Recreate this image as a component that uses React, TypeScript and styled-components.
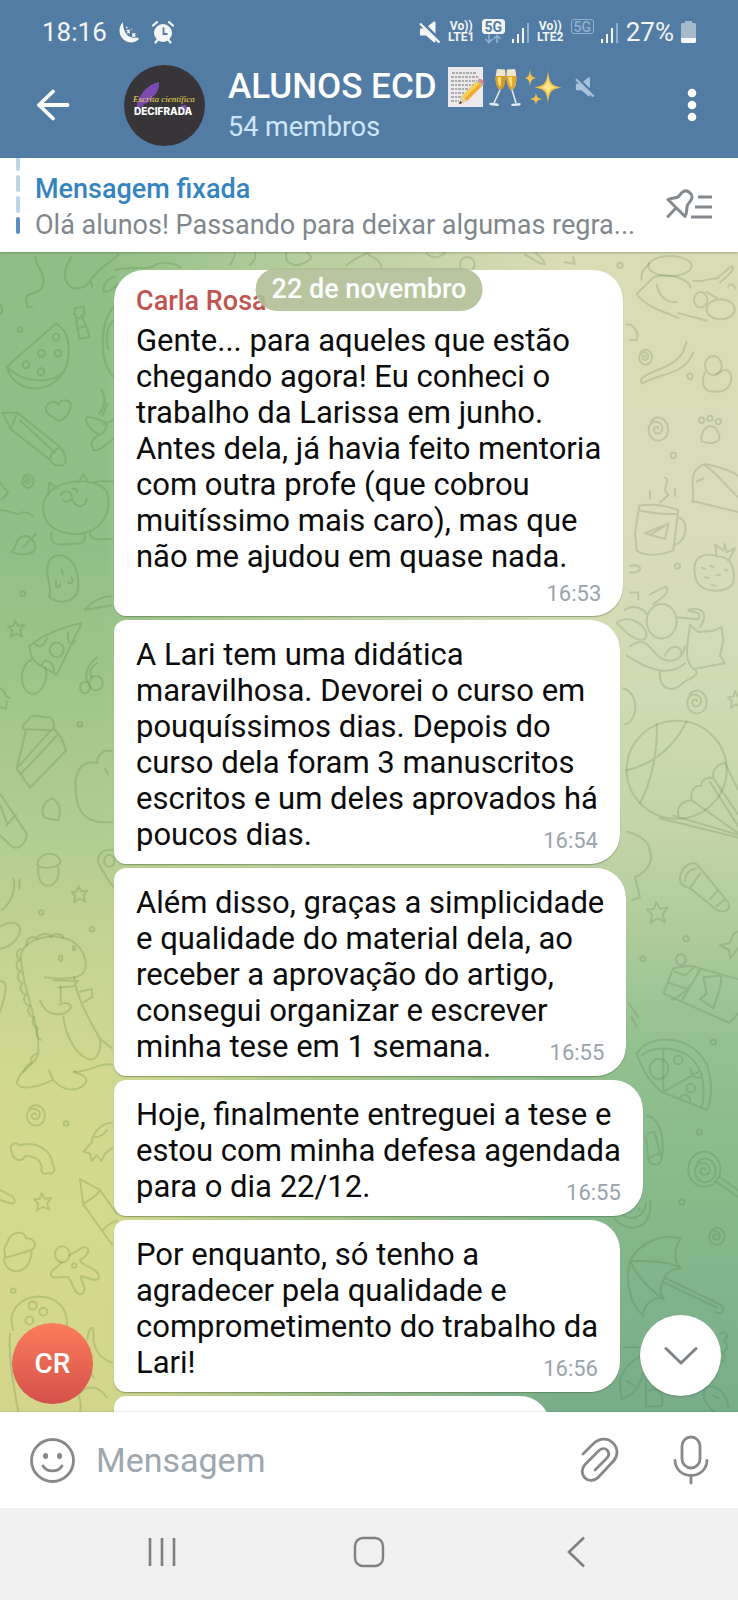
import React from 'react';
import styled, { createGlobalStyle } from 'styled-components';

const GlobalStyle = createGlobalStyle`
  *, *::before, *::after { box-sizing: border-box; }
  html, body { margin: 0; padding: 0; }
  body { font-family: Roboto, "Noto Sans", sans-serif; background: #fff; color: #0b0b0b; }
  button, input { font: inherit; }
`;

const Screen = styled.div`
  display: flex;
  flex-direction: column;
  height: 100vh;
  overflow: hidden;
`;

/* ---------- top area ---------- */

const TopArea = styled.header`
  flex: none;
  background: #527ca3;
  color: #fff;
`;

const StatusBar = styled.div`
  display: flex;
  align-items: center;
  justify-content: space-between;
  height: 62px;
  padding: 2px 42px 0 42px;
  font-size: 26px;
  line-height: 32px;
  color: #f3f6f4;
`;

const StatusGroup = styled.div<{ $gap: number }>`
  display: flex;
  align-items: center;
  gap: ${(p) => p.$gap}px;
`;

const Carrier = styled.div`
  display: flex;
  flex-direction: column;
  align-items: center;
  width: 27px;
  font-size: 12px;
  line-height: 11px;
  font-weight: 700;
`;

const NetworkType = styled.div`
  display: flex;
  flex-direction: column;
  align-items: center;
  height: 26px;
`;

const NetworkTag = styled.span<{ $active?: boolean }>`
  width: 23px;
  height: 15px;
  border: 1px solid ${(p) => (p.$active ? '#f3f6f4' : '#8fb0d0')};
  border-radius: 3px;
  background: ${(p) => (p.$active ? '#f3f6f4' : 'transparent')};
  color: ${(p) => (p.$active ? '#527ca3' : '#8fb0d0')};
  font-size: 14px;
  line-height: 14px;
  font-weight: ${(p) => (p.$active ? 700 : 500)};
  text-align: center;
`;

const TitleRow = styled.div`
  display: flex;
  align-items: center;
  height: 96px;
  padding: 0 31px 10px 29px;
`;

const IconButton = styled.button`
  display: flex;
  align-items: center;
  justify-content: center;
  flex: none;
  padding: 0;
  border: 0;
  background: none;
  color: inherit;
  cursor: pointer;
`;

const GroupPicture = styled.div`
  flex: none;
  width: 81px;
  height: 81px;
  margin: 0 23px 0 46px;
`;

const TitleBlock = styled.div`
  flex: 1;
  min-width: 0;
  padding-top: 2px;
`;

const TitleLine = styled.div`
  display: flex;
  align-items: center;
  height: 42px;
`;

const Title = styled.h1`
  margin: 0 11px 0 0;
  font-size: 35px;
  line-height: 42px;
  font-weight: 500;
  white-space: nowrap;
`;

const MutedMark = styled.span`
  display: flex;
  margin-left: 9px;
`;

const MembersLine = styled.p`
  margin: 0;
  font-size: 27px;
  line-height: 38px;
  color: #cfe6fa;
`;

/* ---------- pinned message ---------- */

const PinnedBar = styled.section`
  flex: none;
  display: flex;
  height: 94px;
  padding: 0 24px 0 16px;
  background: #fff;
  box-shadow: 0 1px 2px rgba(0, 0, 0, 0.25);
  position: relative;
  z-index: 1;
`;

const PinSteps = styled.div`
  display: flex;
  flex-direction: column;
  justify-content: flex-end;
  gap: 4px;
  width: 4px;
  height: 76px;
  margin-right: 15px;
  overflow: hidden;
`;

const PinStep = styled.span<{ $current?: boolean }>`
  flex: none;
  height: 17px;
  border-radius: 2px;
  background: ${(p) => (p.$current ? '#5b8fc0' : '#bdd5e9')};
`;

const PinnedText = styled.div`
  flex: 1;
  min-width: 0;
  padding-top: 13px;
  font-size: 27px;
  line-height: 36px;
`;

const PinnedTitle = styled.p`
  margin: 0;
  font-weight: 500;
  color: #3584c0;
`;

const PinnedPreview = styled.p`
  margin: 0;
  color: #80878c;
  white-space: nowrap;
`;

const PinButton = styled(IconButton)`
  color: #84898d;
  align-self: center;
`;

/* ---------- conversation ---------- */

const Chat = styled.main`
  position: relative;
  flex: 1;
  min-height: 0;
  overflow: hidden;
  display: flex;
  padding: 18px 0 0 12px;
  background: linear-gradient(
    180deg,
    #dadcb5 0%, #dadcb8 24%, #cfdbb2 38%, #c2d4a8 50%,
    #b0cc9c 58%, #94c190 68%, #88ba8a 80%, #78ad8a 100%
  );

  &::before {
    content: '';
    position: absolute;
    inset: 0;
    background: linear-gradient(
      180deg,
      #8fbf86 0%, #90c088 26%, #a3c78a 40%, #b2cd92 50%,
      #c6d491 61%, #d1d88f 71%, #d5d98d 84%, #d3d58b 100%
    );
    mask-image: linear-gradient(90deg, #000 14%, rgba(0, 0, 0, 0.45) 42%, transparent 76%);
  }
`;

const Doodles = styled.svg<{ $side: 'left' | 'right' }>`
  position: absolute;
  top: 0;
  ${(p) => p.$side}: 0;
  width: 370px;
  height: 1160px;
  fill: none;
  stroke: ${(p) => (p.$side === 'left' ? 'rgba(80, 120, 60, 0.23)' : 'rgba(80, 110, 65, 0.2)')};
  stroke-width: 2px;
  stroke-linecap: round;
  stroke-linejoin: round;

  * { vector-effect: non-scaling-stroke; }
`;

const SenderColumn = styled.div`
  position: relative;
  display: flex;
  align-items: flex-end;
  width: 81px;
  margin-right: 21px;
  padding-bottom: 8px;
  flex: none;
`;

const SenderAvatar = styled.div`
  display: flex;
  align-items: center;
  justify-content: center;
  width: 81px;
  height: 81px;
  border-radius: 50%;
  background: linear-gradient(180deg, #fb7d5c, #d4504a);
  color: #fff;
  font-size: 28px;
  font-weight: 500;
`;

const MessageList = styled.ol`
  position: relative;
  display: flex;
  flex-direction: column;
  align-items: flex-start;
  gap: 4px;
  flex: 1;
  margin: 0;
  padding: 0;
  list-style: none;
`;

const Bubble = styled.li<{ $first?: boolean }>`
  flex: none;
  padding: ${(p) => (p.$first ? '15px 22px 9px' : '17px 22px 10px')};
  border-radius: ${(p) => (p.$first ? 30 : 12)}px 30px 30px 12px;
  background: #fff;
  box-shadow: 0 1px 1px rgba(60, 90, 50, 0.45);
`;

const Sender = styled.p`
  margin: 0 0 6px;
  font-size: 27px;
  line-height: 32px;
  font-weight: 500;
  color: #c05550;
`;

const MessageText = styled.p`
  display: flow-root;
  margin: 0;
  font-size: 31px;
  line-height: 36px;
  white-space: pre-line;
`;

const Time = styled.time<{ $ownLine?: boolean }>`
  display: block;
  ${(p) => !p.$ownLine && 'float: right;'}
  margin-top: ${(p) => (p.$ownLine ? 6 : 11)}px;
  font-size: 22px;
  line-height: 26px;
  text-align: right;
  color: #99a3ab;
`;

const NextBubble = styled(Bubble)`
  width: 436px;
  height: 80px;
`;

const DatePill = styled.div`
  position: absolute;
  top: 16px;
  left: 50%;
  transform: translateX(-50%);
  padding: 0 16px;
  border-radius: 22px;
  background: rgba(176, 191, 150, 0.9);
  color: #fff;
  font-size: 27px;
  line-height: 43px;
  font-weight: 500;
  white-space: nowrap;
`;

const ScrollDown = styled(IconButton)`
  position: absolute;
  right: 17px;
  bottom: 16px;
  width: 81px;
  height: 81px;
  border-radius: 50%;
  background: #fff;
  color: #7d8386;
  box-shadow: 0 1px 2px rgba(0, 0, 0, 0.2);
`;

/* ---------- composer and navigation ---------- */

const Composer = styled.form`
  flex: none;
  display: flex;
  align-items: center;
  height: 96px;
  padding: 0 29px;
  background: #fff;
  color: #85898c;
  box-shadow: 0 -1px 1px rgba(0, 0, 0, 0.06);
  position: relative;
`;

const MessageInput = styled.input`
  flex: 1;
  min-width: 0;
  margin: 0 20px;
  padding: 0;
  border: 0;
  outline: 0;
  background: none;
  font-size: 34px;
  line-height: 42px;
  color: #0b0b0b;

  &::placeholder { color: #9da7af; opacity: 1; }
`;

const ComposerActions = styled.div`
  display: flex;
  align-items: center;
  gap: 53px;
`;

const NavBar = styled.nav`
  flex: none;
  display: flex;
  align-items: center;
  height: 92px;
  padding: 0 8% 4px;
  background: #f0f0f0;
  color: #808080;
`;

const NavButton = styled(IconButton)`
  flex: 1;
  height: 60px;
`;

/* ---------- icons ---------- */

const MutedIcon = ({ size, color, label }: { size: number; color: string; label: string }) => (
  <svg width={size} height={size} viewBox="0 0 22 22" role="img" aria-label={label}>
    <path d="M1 7.500h5L14.500 .8c1.200-.8 2-.3 2 1V20c0 1.400-.9 1.800-2 1L7 14.500H1z" fill={color} />
    <path d="M2 .500 22 20" stroke="#527ca3" strokeWidth="3" />
    <path d="M1 2.500 20.500 21.500" stroke={color} strokeWidth="2.400" />
  </svg>
);

const SignalIcon = () => (
  <svg width="18" height="22" viewBox="0 0 18 22" role="img" aria-label="Sinal">
    <g fill="#f3f6f4">
      <rect x="0" y="18" width="2" height="4" />
      <rect x="5" y="13" width="2" height="9" />
      <rect x="10" y="7" width="2" height="15" />
    </g>
    <rect x="15" y="2" width="2" height="20" fill="#8fb0d0" />
  </svg>
);

const MoonIcon = () => (
  <svg width="21" height="22" viewBox="0 0 21 22" role="img" aria-label="Modo dormir">
    <path d="M4 1C-1 6-.5 14 4.500 18.500c4.500 4 11.500 4 15.500-.5l-1.500-1.500c-4.500 1-9-.2-11.500-4C4.500 9 4 5 4 1z" fill="#f3f6f4" />
    <path d="M7 6.500h1.500M7.500 9.500H10l-1 2h2M12.500 8l.5.500M13 13h2.500l-1.500 2h2.500" stroke="#f3f6f4" strokeWidth="1.500" fill="none" />
  </svg>
);

const AlarmIcon = () => (
  <svg width="22" height="23" viewBox="0 0 22 23" role="img" aria-label="Alarme">
    <circle cx="11" cy="12" r="9" fill="#f3f6f4" />
    <path d="M1 4.500 5 1.200M21 4.500l-4-3.300M3.500 21.500l2-2.500M18.500 21.500l-2-2.500" stroke="#f3f6f4" strokeWidth="2.200" strokeLinecap="round" />
    <path d="M11.500 6.500V13h4" stroke="#527ca3" strokeWidth="1.800" fill="none" />
  </svg>
);

const BatteryIcon = () => (
  <svg width="15" height="22" viewBox="0 0 15 22" role="img" aria-label="Bateria">
    <path d="M4 0h7v2h2.500c.8 0 1.500.7 1.500 1.500V17H0V3.500C0 2.700.7 2 1.500 2H4z" fill="#a6b9cb" />
    <path d="M0 17h15v3.500c0 .8-.7 1.500-1.500 1.500h-12C.7 22 0 21.300 0 20.500z" fill="#f8faf7" />
  </svg>
);

const TransferIcon = () => (
  <svg width="18" height="10" viewBox="0 0 18 10" fill="none" stroke="#8fb0d0" strokeWidth="1.600" aria-hidden="true">
    <path d="M5 0v8M1.500 5 5 8.500 8.500 5M13 9V1.500M9.500 5 13 1.500 16.500 5" />
  </svg>
);

const BackArrow = () => (
  <svg width="49" height="32" viewBox="0 0 49 32" fill="none" stroke="#fff" strokeWidth="3.800" strokeLinecap="round" strokeLinejoin="round" aria-hidden="true">
    <path d="M38.500 16H10M24 2.500 10 16l14 13.500" />
  </svg>
);

const MoreIcon = () => (
  <svg width="30" height="34" viewBox="0 0 30 34" fill="#fff" aria-hidden="true">
    <circle cx="15" cy="5" r="4.300" />
    <circle cx="15" cy="17" r="4.300" />
    <circle cx="15" cy="29" r="4.300" />
  </svg>
);

const GroupLogo = () => (
  <svg width="81" height="81" viewBox="0 0 81 81" role="img" aria-label="Escrita científica decifrada">
    <circle cx="40.500" cy="40.500" r="40.500" fill="#373538" />
    <path d="M12 46c1-13 9-26 23-29 .5 6-2 11-5 14l-3 1 2 1c-3 4-7 6-10 6l1 2-5 1z" fill="#7a4bb0" />
    <path d="M56 42c2-3 6-3 7 0l-1 3h-6z" fill="#7a4bb0" />
    <text x="9" y="37" fontFamily="'Liberation Serif', serif" fontStyle="italic" fontWeight="400" fontSize="9" fill="#eddc5a">Escrita científica</text>
    <text x="10" y="50" fontFamily="Inter, sans-serif" fontWeight="800" fontSize="10" fill="#fff">DECIFRADA</text>
  </svg>
);

const MemoEmoji = () => (
  <svg width="37" height="40" viewBox="0 0 37 40" role="img" aria-label="Bloco de notas">
    <rect x="0" y="0" width="35" height="40" fill="#ebe9ea" />
    <g stroke="#6f6f74" strokeWidth="1.100" strokeDasharray="3 1 2 1">
      <path d="M4 6h24M3 10h28M3 14h26M3 18h24M3 22h19M3 26h14M3 30h10M3 34h8" />
    </g>
    <path d="M11 37l3-8L29 14l5 5-15 15z" fill="#f2a92e" />
    <path d="M14 29 29 14l2.500 2.500L16.500 31.500z" fill="#fbcf5a" />
    <path d="M11 37l3-8 5 5z" fill="#e9cfa0" />
    <path d="M11 37l1.200-3 1.900 1.900z" fill="#333" />
    <path d="M29 14l2-2 5 5-2 2z" fill="#a9b4b8" />
    <path d="M31 12c1.500-1.500 6 2.500 4.800 4.800l-1 .7-4.300-4.800z" fill="#ea7f8c" />
  </svg>
);

const GlassesEmoji = () => (
  <svg width="32" height="38" viewBox="0 0 32 38" role="img" aria-label="Taças brindando">
    <path d="M8 1l8 .5c1.500 9-.5 18-4.500 20.500C6.500 20 5.500 10 8 1z" fill="#efe7c8" />
    <path d="M26 1l-8 .5c-1.500 9 .5 18 4.500 20.500 5-2 6-12 3.500-21z" fill="#efe7c8" />
    <path d="M6.700 8h9.700c.2 7-1.500 12-4.900 14-4-2-5.300-8-4.800-14z" fill="#d99a22" />
    <path d="M27.200 8h-9.600c-.2 7 1.500 12 4.900 14 4-2 5.200-8 4.700-14z" fill="#e3a52b" />
    <path d="M8.500 9h3.500c.3 5 0 8-.8 10-2-2-2.900-6-2.700-10zM19.500 9H23c.3 5 .3 8-.3 10-2-2-3.200-6-3.200-10z" fill="#f8dc79" />
    <path d="M11 22 5 35M23 22l4 13" stroke="#e4ebef" strokeWidth="1.600" />
    <path d="M1.500 36l7 .8M23.500 37l7-.8" stroke="#e4ebef" strokeWidth="2.400" strokeLinecap="round" />
  </svg>
);

const SparklesEmoji = () => (
  <svg width="37" height="38" viewBox="0 0 37 38" role="img" aria-label="Brilhos">
    <g fill="#f3c14c">
      <path d="M23 2c1 12 3 16 14 17.500C26 21 24 24 23 36c-1-12-3-15-14-16.500C20 18 22 14 23 2z" />
      <path d="M5 1c.5 6 1.500 8 6 9-4.500 1-5.500 3-6 9-.5-6-1.500-8-5-9 3.500-1 4.500-3 5-9z" />
      <path d="M11 24c.4 5 1.500 6 6 7-4.500 1-5.600 2-6 7-.4-5-1.500-6-6-7 4.500-1 5.600-2 6-7z" />
    </g>
    <path d="M23 9c.6 7 2 9 8 10.500-6 1-7.400 3-8 9.500-.6-6.500-2-8.500-8-9.500 6-1.500 7.400-3.500 8-10.500z" fill="#fde68a" />
  </svg>
);

const PinListIcon = () => (
  <svg width="48" height="32" viewBox="0 0 48 32" fill="none" stroke="currentColor" strokeWidth="3" strokeLinecap="round" strokeLinejoin="round" aria-hidden="true">
    <path d="M2 10.500c3-1.500 7-1.500 10-2.500l4-4.500c2.500-2.300 5.500-2 8 .3s2.700 5.500.5 8L21.500 16c-1.500 4 0 8-2.500 11.500z" />
    <path d="M9.500 19.500 2 27.500" />
    <path d="M32 8h14M29 18h17M25 28h21" strokeLinecap="butt" />
  </svg>
);

const ChevronDown = () => (
  <svg width="34" height="20" viewBox="0 0 34 20" fill="none" stroke="currentColor" strokeWidth="3" strokeLinecap="round" strokeLinejoin="round" aria-hidden="true">
    <path d="M2 2.500 17 17 32 2.500" />
  </svg>
);

const SmileIcon = () => (
  <svg width="47" height="47" viewBox="0 0 47 47" fill="none" stroke="currentColor" strokeWidth="2.800" strokeLinecap="round" aria-hidden="true">
    <circle cx="23.500" cy="23.500" r="21" />
    <path d="M14 29c4 6.500 15 6.500 19 0" />
    <ellipse cx="16.500" cy="19" rx="2.500" ry="3" fill="currentColor" stroke="none" />
    <ellipse cx="30.500" cy="19" rx="2.500" ry="3" fill="currentColor" stroke="none" />
  </svg>
);

const ClipIcon = () => (
  <svg width="40" height="46" viewBox="0 0 40 46" fill="none" stroke="currentColor" strokeWidth="2.800" strokeLinecap="round" strokeLinejoin="round" aria-hidden="true">
    <path d="M3 17 13 7c7-6.500 15-6 20-1 5.500 5.500 5 13 .5 18L19 39.500c-4.500 5-10.500 5-14 1.500-4-4-3.500-9.500 0-13.500L18.500 14c3-3 6.500-3 8.500-1s2.500 5 0 8L15 33" />
  </svg>
);

const MicIcon = () => (
  <svg width="36" height="50" viewBox="0 0 36 50" fill="none" stroke="currentColor" strokeWidth="2.800" strokeLinecap="round" aria-hidden="true">
    <rect x="9" y="2" width="18" height="31" rx="9" />
    <path d="M2 25.500c1 20 31 20 32 0M18 41v7" />
  </svg>
);

const RecentsIcon = () => (
  <svg width="30" height="30" viewBox="0 0 30 30" stroke="currentColor" strokeWidth="2.600" aria-hidden="true">
    <path d="M3 1v28M15 1v28M27 1v28" />
  </svg>
);

const HomeIcon = () => (
  <svg width="32" height="32" viewBox="0 0 32 32" fill="none" stroke="currentColor" strokeWidth="2.400" aria-hidden="true">
    <rect x="2" y="2" width="28" height="28" rx="8" />
  </svg>
);

const NavBackIcon = () => (
  <svg width="20" height="32" viewBox="0 0 20 32" fill="none" stroke="currentColor" strokeWidth="2.600" aria-hidden="true">
    <path d="M18 1.500 3 16l15 14.500" />
  </svg>
);

/* ---------- wallpaper drawings ---------- */

type Spot = { x: number; y: number; s?: number };

const Spiral = ({ x, y, s = 1 }: Spot) => (
  <path transform={`translate(${x} ${y}) scale(${s})`} d="M-14-12C5-32 32-8 20 14 5 34-24 20-18-2-10-18 12-12 11 2 7 14-9 12-8 2-5-4 2-3 2 1" />
);

const Star = ({ x, y, s = 1 }: Spot) => (
  <path transform={`translate(${x} ${y}) scale(${s})`} d="M-3-22 6-8 24-10 12 4 18 20 0 12-16 22-12 4-24-6-8-8z" />
);

const Dots = ({ at, r = 8 }: { at: [number, number][]; r?: number }) => (
  <>
    {at.map(([x, y]) => (
      <ellipse key={`${x}-${y}`} cx={x} cy={y} rx={r} ry={r - 1} />
    ))}
  </>
);

const LeftDoodles = () => (
  <Doodles $side="left" viewBox="0 0 370 1160" aria-hidden="true">
    <g transform="translate(0 -97) scale(.3333)">
      <path d="M345 345C400 330 440 350 470 328c30-10 60-2 70 10M690 330c10-15 15-25 15-38M765 292c5 20-5 30-15 38M860 292c-10 30 20 45 45 35s40-20 15-35M1040 330c20-15 40-30 65-35" />
    </g>
    <g transform="translate(0 -2) scale(.3333 .3827)">
      <path d="M105 18C110 50 140 60 128 95 118 120 78 105 78 130L82 148H96" />
      <path d="M215 18C180 60 195 105 235 100 270 95 265 80 290 60 310 40 330 35 355 12M272 78l4 18M345 70C320 75 305 95 312 108 330 112 345 95 355 90" />
      <path d="M225 152l25-4 4 17-9 7 17 33 6 23-30 4-6-27-4-33-6-7zM230 180l20-5M235 205l23-7M0 140l8 20-8 8" />
      <path d="M20 305 168 192C215 215 215 280 190 320 150 350 70 350 20 305zM20 305C40 370 140 385 190 320" />
      <Dots at={[[168, 228], [124, 270], [174, 270], [78, 300], [123, 318]]} r={10} />
      <path d="M340 150C300 190 295 290 340 330M340 185c-20 15-25 50-15 75" />
      <path d="M175 405C165 388 135 400 138 418 140 432 160 435 175 446 195 445 215 420 212 402 205 388 180 392 175 405z" />
      <path d="M8 425 52 425 180 515M8 425 32 468 150 548M52 425 32 468M60 445 165 530M180 515C165 520 148 535 150 548 160 568 200 570 197 548 195 530 185 520 180 515z" />
      <path d="M258 440C262 430 300 445 315 450 330 455 310 480 300 482 285 480 258 460 258 440zM300 482C280 490 268 505 280 522 300 530 325 500 340 495M305 365C318 385 318 405 298 428M322 402l-14 30M310 455l30-10" />
      <Spiral x={82} y={602} s={0.8} />
      <path d="M0 608l25 27L5 652M0 680c30-2 50 15 60 8 15-8 30 2 40 7" />
      <path d="M130 665C140 600 280 585 320 630 340 690 300 735 240 742 160 745 125 710 130 665zM145 640l3-32 24 14M235 608l15-23 15 23M155 738c-5 22 5 32 30 32l55-4c18-6 18-21 10-28M270 735c-5 25 30 22 66 20M280 608c20-6 40-3 60-3M182 640c10-14 33-12 33 5s-25 14-25 8M215 650c15 30 45 20 45 0M218 625c10-5 18 5 12 8" />
      <path d="M32 788C50 785 45 750 70 748 90 745 105 760 106 780 95 800 60 798 32 788zM70 775l38-33" />
      <path d="M145 860C135 820 150 795 185 798 230 805 240 860 232 895 215 925 170 925 145 905 155 900 150 885 145 860zM185 835l3 12M168 865v14c6 6 12 0 12-6M205 868c12 8 16-2 10-12" />
      <path d="M255 940C280 915 310 905 336 905M255 940l81-12" />
      <Star x={48} y={990} />
      <path d="M245 975C190 985 130 1005 88 1035 92 1060 95 1075 130 1090l40 20zM105 1028c10 15 32 5 35-15M205 1000c-5 30 10 35 20 22M125 1085c5-20 35-15 38 20" />
      <ellipse cx="170" cy="1045" rx="21" ry="19" />
      <path d="M95 1070C50 1090 60 1160 100 1160c35-5 45-50 35-68" />
      <ellipse cx="255" cy="1143" rx="15" ry="15" />
      <ellipse cx="288" cy="1132" rx="20" ry="19" />
      <path d="M262 1128C250 1100 270 1080 290 1065M275 1115c-13-15 5-30 15-35M0 1145c20 5 10 25 30 25M0 1195l18 3 2-18" />
      <path d="M70 1252c-10-12 20-22 20-32 20-10 40 5 55 0 20 5 20 30 10 35zM78 1255 50 1355 90 1405 198 1308C190 1280 180 1265 160 1250M50 1355 150 1258M62 1370 175 1265" />
      <path d="M336 1310c-26-10-46 15-44 30-52-10-72 30-64 80 2 50 32 80 108 75M315 1355l10 15M128 1470c-3-30 27-35 27-38 25 13 30 28 20 58-25-5-45 0-47-20" />
      <path d="M0 1420l80 105c0 30-30 43-45 33L0 1530M18 1505l30-30M0 1450l20 45" />
      <Dots at={[[60, 208], [68, 898], [240, 1240]]} r={7} />
    </g>
    <g transform="translate(0 598) scale(.3333 .3636)">
      <path d="M112 40C115 5 170 0 182 30 180 50 120 55 112 40zM115 48C112 80 125 98 145 98 165 98 180 75 175 48M345 0C300-5 285 20 300 45 315 65 325 90 345 105" />
      <circle cx="328" cy="30" r="16" />
      <Star x={238} y={122} />
      <path d="M40 80C50 110 30 150 5 165M58 82v25M0 210C40 190 65 205 60 225 50 255 20 270 0 272M0 360C25 360 20 390 0 445" />
      <path d="M62 290C75 240 160 225 215 250 260 275 270 330 240 345 210 360 160 352 135 350M62 290C65 380 120 470 115 560 100 600 60 600 50 640 60 665 120 650 158 632M148 605C160 660 230 675 258 640 265 620 235 615 222 610M120 415C140 460 190 460 212 435 215 420 190 418 178 425M182 375v40" />
      <path d="M80 262c-5-20 20-28 30-18 5-15 35-18 42-6 10-12 35-8 38 4M64 272c-16 4-18 22-4 30-14 6-14 26 2 32-14 8-10 28 6 32-12 10-6 28 10 32-12 10-4 28 12 30-12 12-2 30 12 32-10 14 0 28 12 30-8 14-2 28 8 32M110 560c-15 5-20 15-15 25-15 5-20 15-25 25" />
      <path d="M222 350C235 420 260 450 300 520 305 560 285 580 265 575 220 560 195 500 190 458M222 610C270 610 300 585 336 590M300 520l36 25M240 390l35-8 2 22-25 14M160 358l75 2-15 15-45 3" />
      <ellipse cx="222" cy="270" rx="4" ry="6" />
      <ellipse cx="182" cy="298" rx="5" ry="8" />
      <Spiral x={105} y={727} s={1.3} />
      <path d="M35 830C25 810 45 800 60 812 110 800 155 825 158 865 170 880 160 895 145 888 130 895 120 885 125 872 120 845 90 840 75 842 65 860 40 855 35 830zM336 750C300 750 275 785 275 805l-25 25 20 5 5 20 15-15 15 15 10-20 21-15M285 790c15 0 30-10 35-20" />
      <Star x={128} y={968} s={1.1} />
      <path d="M0 935l40 20c10 15 0 20-15 15L0 962M240 905 250 975 336 1085M240 905l60 30 50 65M250 975c10-12 40-20 50-40M310 1045c10-15 25-20 40-25" />
      <path d="M15 1110C5 1085 30 1080 25 1070 45 1045 75 1050 78 1068 110 1070 110 1090 95 1100L15 1122zM12 1125C15 1170 90 1175 95 1105" />
      <circle cx="187" cy="1112" r="22" />
      <path d="M208 1115L250 1092C272 1092 270 1112 240 1128 245 1145 300 1150 297 1178 280 1190 270 1175 242 1172 250 1200 265 1215 240 1222 220 1220 220 1190 205 1175 180 1170 155 1185 152 1165 155 1150 175 1150 185 1134" />
      <path d="M40 1320C20 1270 60 1228 118 1228 180 1230 205 1270 200 1310M30 1330C25 1400 40 1470 55 1545M235 1500c20-30 60-30 85 5M262 1345C270 1300 285 1305 280 1350 290 1390 310 1400 336 1410M240 1545c5-20 0-35-5-45M270 1370c-15 30-5 60 10 80" />
      <Dots at={[[98, 1253], [130, 1270], [88, 1294]]} r={12} />
      <Dots at={[[124, 172], [276, 218], [198, 752], [40, 1212], [223, 1143]]} r={7} />
    </g>
  </Doodles>
);

const RightDoodles = () => (
  <Doodles $side="right" viewBox="0 0 370 1160" aria-hidden="true">
    <g transform="translate(0 -97) scale(.3333)">
      <path d="M0 300c20 5 40 20 42 45M175 295c20 18 40 12 55 0M470 300c25 5 30 25 60 28M500 292c20 15 30 25 30 36M590 322l30 4-5-20" />
      <circle cx="298" cy="328" r="22" />
    </g>
    <g transform="translate(242 -2) scale(.3333 .3827)">
      <ellipse cx="180" cy="42" rx="65" ry="26" />
      <path d="M95 78C90 50 110 48 118 35M80 115 130 72C180 55 240 80 242 98M80 115C110 150 160 160 205 178M205 165l85 20M250 80c40 5 50-10 70-5l45-33c10 3 5 13-35 43M140 90c10 40 40 50 60 45M290 110l30 15M355 95q10-12 22 5" />
      <circle cx="272" cy="130" r="20" />
      <ellipse cx="332" cy="155" rx="42" ry="26" />
      <path d="M50 195c15-5 40 20 30 40H60M95 335c35-25 95-25 125-70l10-25M100 348c50-28 120-18 150-80M95 335c-5 8 0 14 5 13" />
      <Spiral x={105} y={278} s={0.9} />
      <circle cx="310" cy="302" r="25" />
      <path d="M284 320c-16 40 6 52 36 50 40 0 50-30 40-50-15-15-30 0-40 5" />
      <Spiral x={142} y={465} s={1.4} />
      <path d="M275 500C270 480 285 462 300 460 320 460 330 480 328 495 310 510 290 505 275 500z" />
      <Dots at={[[275, 445], [300, 440], [325, 448]]} />
      <path d="M250 660l-2-60c2-30 32-45 52-38 40 8 70 18 84 28M245 655l139 30M285 562c45 28 65 58 99 83M260 605l20-8" />
      <path d="M88 668C130 662 170 668 205 680L190 785C150 800 100 800 80 785L75 740zM205 700c30 0 30 60-10 70M88 680c42 10 72 10 110 10M105 740l70-25-10 40zM125 742l48-26M165 595c20 10-15 30 10 45l-25 20M120 630v20M195 625v18" />
      <path d="M255 850C245 800 280 790 320 800 370 800 375 840 370 870 350 900 260 900 255 850zM320 800l-5-30 25 15 5-17 5 22 25-10-20 32M275 830l10 3M300 825l10 3M285 855l10 2M320 850l10-2M345 835l8 3M305 875l10 2" />
      <path d="M60 895h25v18M60 825c20-3 30 0 30 8s-15 10-30 10M120 900l45-20c15 5 10 20-35 45M20 975c30-25 90 0 90 35-10 15-30 10-60-10l-30-25M205 960l60 5c15-25-25-15-30-25 55-10 55 20 35 45M45 940c20-15 50-5 65 10" />
      <circle cx="155" cy="970" r="45" />
      <path d="M235 1010l5-30 25 18 45-3 25-10 5 35-10 40 15 20-95 15C225 1075 230 1040 235 1010zM50 1060c70 40 130 55 175 20M60 1035c50-30 60 10 90 30 40 20 70 0 75-30M150 1100c-5 50 40 60 70 30 30-15 50-20 35-35M165 1060c15-30 45-30 50-5" />
      <Spiral x={258} y={1178} s={1.4} />
      <Star x={378} y={1175} />
      <path d="M40 1145c50 15 45 85 5 95" />
      <ellipse cx="200" cy="1358" rx="150" ry="128" />
      <path d="M140 1238C145 1310 120 1400 90 1445M230 1232C180 1320 100 1350 48 1360M345 1340C320 1345 305 1360 310 1380 280 1375 270 1395 275 1400 250 1398 240 1415 245 1438 210 1440 200 1460 205 1478M345 1340l39 70M310 1380l74 95M300 1390l84 115M245 1438l139 85M190 1478l194 50M150 1485l234 50" />
      <path d="M50 1520c30 5 60 20 70 45" />
      <Dots at={[[30, 40], [190, 537], [202, 826], [240, 330]]} />
    </g>
    <g transform="translate(242 598) scale(.3333 .3636)">
      <path d="M118 0C135 30 110 60 75 75L90 130 65 138M210 75C215 45 245 30 262 40L355 145C365 165 340 175 320 165L240 105C215 100 208 90 210 75zM225 85c0-20 15-32 35-35M270 65l-30 40M300 135l25-25M320 155l25-20" />
      <Star x={142} y={172} s={1.3} />
      <path d="M384 225c-19 0-19 25-24 30l-30 7 28 13 2 23 24-28M160 395l30-70 50-7 144 37M160 395l198 80 26-25M185 412C220 400 260 360 268 325M215 415 270 330M175 365l50 15M195 335l30 10 30-25M280 350l55-5-5 35-20 55-40-25 20-15z" />
      <circle cx="213" cy="302" r="15" />
      <path d="M80 560C120 500 250 510 290 590 310 640 305 690 290 715L155 665C120 640 95 600 80 560zM95 565C140 530 250 540 275 620 285 660 280 690 275 708M160 545V665L265 610M240 600c5 20 15 30 30 25M210 685c5-20 30-15 32 10" />
      <circle cx="147" cy="602" r="28" />
      <Dots at={[[205, 577], [242, 655]]} r={13} />
      <path d="M55 420l30 40M65 460l15 25M112 730C150 740 165 790 155 850 150 870 120 870 115 850L108 790M112 780l22-5 18 65M120 845l35-15" />
      <circle cx="283" cy="878" r="48" />
      <Spiral x={283} y={878} s={1.5} />
      <path d="M329 900l55 35M318 912l66 42" />
      <Spiral x={318} y={1060} s={1.1} />
      <path d="M15 1015C60 1060 130 1040 120 965M40 1005c25 15 65 5 68-35M85 985l5 5" />
      <path d="M60 1130C90 1080 150 1055 212 1068 190 1100 190 1130 212 1150 190 1150 165 1165 162 1180M60 1130C110 1130 180 1130 212 1150M60 1130C80 1170 120 1210 162 1235 130 1225 100 1250 100 1282 60 1250 45 1190 60 1130zM168 1178 330 1250C350 1265 335 1280 315 1270M162 1190 320 1258M162 1180C148 1200 150 1220 162 1235" />
      <path d="M40 1370c30-8 50 0 62 0M30 1470C30 1430 70 1400 100 1390 110 1450 80 1500 35 1510zM50 1460l25 15M108 1420v112M115 1490c20-20 50 0 40 40h-40M285 1480c25-15 65 10 70 52M285 1480c-15 30 15 55 25 65M310 1500l15 8M330 1330c20-10 30 10 10 20 20 10 10 30-5 30 15 10 10 25 0 30" />
      <Dots at={[[228, 244], [99, 299], [310, 528], [268, 776], [216, 968]]} />
    </g>
  </Doodles>
);

/* ---------- content ---------- */

type Message = { time: string; text: string };

const messages: Message[] = [
  {
    time: '16:53',
    text: 'Gente... para aqueles que estão\nchegando agora! Eu conheci o\ntrabalho da Larissa em junho.\nAntes dela, já havia feito mentoria\ncom outra profe (que cobrou\nmuitíssimo mais caro), mas que\nnão me ajudou em quase nada.',
  },
  {
    time: '16:54',
    text: 'A Lari tem uma didática\nmaravilhosa. Devorei o curso em\npouquíssimos dias. Depois do\ncurso dela foram 3 manuscritos\nescritos e um deles aprovados há\npoucos dias.',
  },
  {
    time: '16:55',
    text: 'Além disso, graças a simplicidade\ne qualidade do material dela, ao\nreceber a aprovação do artigo,\nconsegui organizar e escrever\nminha tese em 1 semana.',
  },
  {
    time: '16:55',
    text: 'Hoje, finalmente entreguei a tese e\nestou com minha defesa agendada\npara o dia 22/12.',
  },
  {
    time: '16:56',
    text: 'Por enquanto, só tenho a\nagradecer pela qualidade e\ncomprometimento do trabalho da\nLari!',
  },
];

export default function App() {
  return (
    <Screen>
      <GlobalStyle />
      <TopArea>
        <StatusBar>
          <StatusGroup $gap={12}>
            <span>18:16</span>
            <MoonIcon />
            <AlarmIcon />
          </StatusGroup>
          <StatusGroup $gap={7}>
            <MutedIcon size={22} color="#f3f6f4" label="Som desativado" />
            <Carrier><span>Vo))</span><span>LTE1</span></Carrier>
            <NetworkType>
              <NetworkTag $active>5G</NetworkTag>
              <TransferIcon />
            </NetworkType>
            <SignalIcon />
            <Carrier><span>Vo))</span><span>LTE2</span></Carrier>
            <NetworkType>
              <NetworkTag>5G</NetworkTag>
            </NetworkType>
            <SignalIcon />
            <span>27%</span>
            <BatteryIcon />
          </StatusGroup>
        </StatusBar>
        <TitleRow>
          <IconButton type="button" aria-label="Voltar"><BackArrow /></IconButton>
          <GroupPicture><GroupLogo /></GroupPicture>
          <TitleBlock>
            <TitleLine>
              <Title>ALUNOS ECD</Title>
              <StatusGroup $gap={4}>
                <MemoEmoji />
                <GlassesEmoji />
                <SparklesEmoji />
                <MutedMark><MutedIcon size={20} color="#a9c3de" label="Silenciado" /></MutedMark>
              </StatusGroup>
            </TitleLine>
            <MembersLine>54 membros</MembersLine>
          </TitleBlock>
          <IconButton type="button" aria-label="Mais opções"><MoreIcon /></IconButton>
        </TitleRow>
      </TopArea>

      <PinnedBar>
        <PinSteps>
          <PinStep />
          <PinStep />
          <PinStep />
          <PinStep $current />
        </PinSteps>
        <PinnedText>
          <PinnedTitle>Mensagem fixada</PinnedTitle>
          <PinnedPreview>Olá alunos! Passando para deixar algumas regra...</PinnedPreview>
        </PinnedText>
        <PinButton type="button" aria-label="Mensagens fixadas"><PinListIcon /></PinButton>
      </PinnedBar>

      <Chat>
        <LeftDoodles />
        <RightDoodles />
        <SenderColumn>
          <SenderAvatar>CR</SenderAvatar>
        </SenderColumn>
        <MessageList>
          {messages.map((message, index) => (
            <Bubble key={message.text} $first={index === 0}>
              {index === 0 && <Sender>Carla Rosa</Sender>}
              <MessageText>
                {message.text}
                <Time $ownLine={index === 0}>{message.time}</Time>
              </MessageText>
            </Bubble>
          ))}
          <NextBubble />
        </MessageList>
        <DatePill>22 de novembro</DatePill>
        <ScrollDown type="button" aria-label="Ir para o fim"><ChevronDown /></ScrollDown>
      </Chat>

      <Composer>
        <IconButton type="button" aria-label="Emojis"><SmileIcon /></IconButton>
        <MessageInput type="text" placeholder="Mensagem" aria-label="Mensagem" />
        <ComposerActions>
          <IconButton type="button" aria-label="Anexar"><ClipIcon /></IconButton>
          <IconButton type="button" aria-label="Gravar áudio"><MicIcon /></IconButton>
        </ComposerActions>
      </Composer>

      <NavBar>
        <NavButton type="button" aria-label="Recentes"><RecentsIcon /></NavButton>
        <NavButton type="button" aria-label="Início"><HomeIcon /></NavButton>
        <NavButton type="button" aria-label="Voltar"><NavBackIcon /></NavButton>
      </NavBar>
    </Screen>
  );
}
